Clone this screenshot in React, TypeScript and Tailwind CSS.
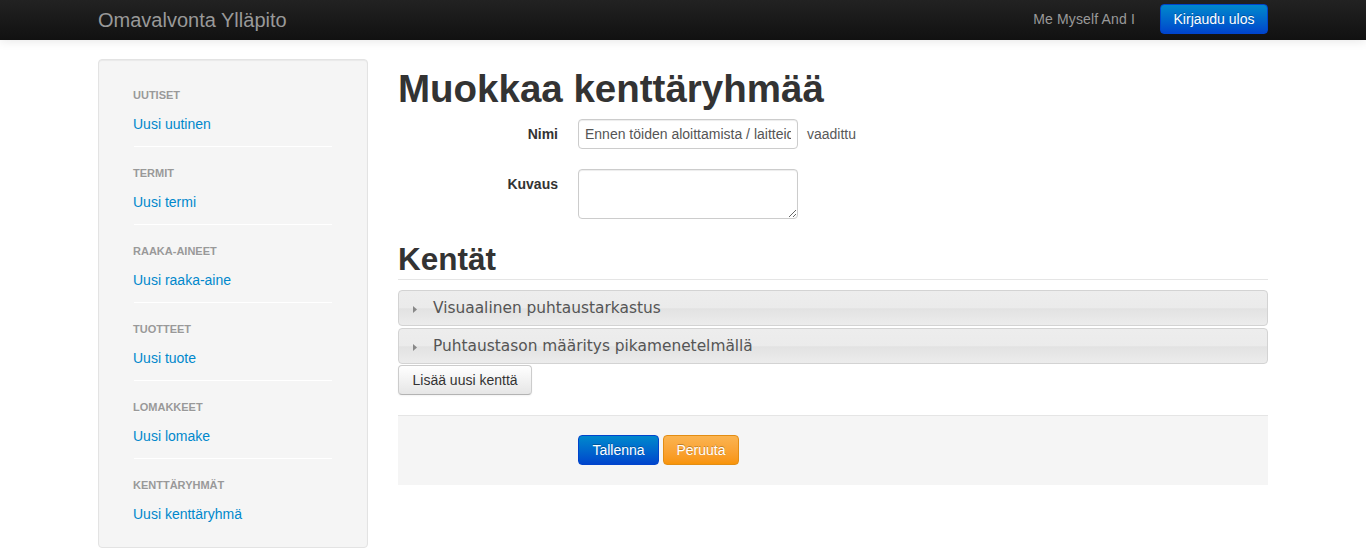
const sections = [
  { title: "Uutiset", link: "Uusi uutinen" },
  { title: "Termit", link: "Uusi termi" },
  { title: "Raaka-aineet", link: "Uusi raaka-aine" },
  { title: "Tuotteet", link: "Uusi tuote" },
  { title: "Lomakkeet", link: "Uusi lomake" },
  { title: "Kenttäryhmät", link: "Uusi kenttäryhmä" },
];

const fields = ["Visuaalinen puhtaustarkastus", "Puhtaustason määritys pikamenetelmällä"];

function Navbar() {
  return (
    <header className="h-10 bg-linear-to-b from-[#222222] to-[#111111] shadow-[0_1px_10px_rgba(0,0,0,0.1)]">
      <div className="mx-auto flex h-full w-[1170px] items-center justify-between">
        <span className="text-[20px] leading-5 text-[#999999]">Omavalvonta Ylläpito</span>
        <div className="flex items-center self-start pt-[4px]">
          <span className="text-[14px] tracking-[0.15px] text-[#999999]">Me Myself And I</span>
          <button className="ml-[25px] h-[30px] w-[108px] rounded-[4px] border border-[#0044cc] bg-linear-to-b from-[#0088cc] to-[#0044cc] text-[14px] text-white [text-shadow:0_-1px_0_rgba(0,0,0,0.25)]">
            Kirjaudu ulos
          </button>
        </div>
      </div>
    </header>
  );
}

function Sidebar() {
  return (
    <aside className="w-[270px] shrink-0 self-start rounded-[4px] border border-[#e3e3e3] bg-[#f5f5f5] pb-[23px] pl-[34px] pr-[35px] pt-[25px] shadow-[inset_0_1px_1px_rgba(0,0,0,0.05)]">
      {sections.map((s, i) => (
        <div key={s.title}>
          {i > 0 ? (
            <div className="mb-[16px] mt-[12px] ml-px h-px border-b border-white bg-[#e5e5e5]" />
          ) : null}
          <div className="h-5 text-[11px] font-bold uppercase leading-5 text-[#999999] [text-shadow:0_1px_0_rgba(255,255,255,0.5)]">
            {s.title}
          </div>
          <a className="mt-[9px] block h-5 text-[14px] leading-5 text-[#0088cc]">{s.link}</a>
        </div>
      ))}
    </aside>
  );
}

function Triangle() {
  return (
    <svg width="16" height="16" viewBox="0 0 16 16" className="shrink-0">
      <polygon points="6,5 10,8.5 6,12" fill="#888888" />
    </svg>
  );
}

export default function App() {
  return (
    <div className="min-h-[552px] bg-white font-['Liberation_Sans',Arial,sans-serif] text-[14px] text-[#333333]">
      <Navbar />
      <div className="mx-auto flex w-[1170px] gap-[30px] pt-[19px]">
        <Sidebar />
        <main className="w-[870px]">
          <h1 className="mt-[10px] h-10 text-[38.5px] font-bold leading-10 text-[#333333]">
            Muokkaa kenttäryhmää
          </h1>
          <div className="mt-[10px] flex">
            <label className="w-[160px] pt-[5px] text-right text-[14px] font-bold leading-5">Nimi</label>
            <div className="ml-[20px] flex items-start">
              <input
                readOnly
                value="Ennen töiden aloittamista / laitteiden puhtaus"
                className="h-[30px] w-[220px] rounded-[4px] border border-[#cccccc] px-[6px] text-[14px] text-[#555555] shadow-[inset_0_1px_1px_rgba(0,0,0,0.075)] outline-none"
              />
              <span className="ml-[9px] pt-[5px] leading-5 text-[#595959]">vaadittu</span>
            </div>
          </div>
          <div className="mt-[20px] flex">
            <label className="w-[160px] pt-[5px] text-right text-[14px] font-bold leading-5">Kuvaus</label>
            <textarea className="ml-[20px] block h-[50px] w-[220px] rounded-[4px] border border-[#cccccc] shadow-[inset_0_1px_1px_rgba(0,0,0,0.075)] outline-none" />
          </div>
          <h2 className="mt-[20px] h-[41px] border-b border-[#e5e5e5] text-[31.5px] font-bold leading-10 text-[#333333]">
            Kentät
          </h2>
          <div className="mt-[10px]">
            {fields.map((f, i) => (
              <div
                key={f}
                className={`flex h-[36px] items-center rounded-[4px] border border-[#d3d3d3] bg-[linear-gradient(to_bottom,#ededed_0%,#ebebeb_50%,#e2e2e2_52%,#ececec_100%)] pl-[8px] pt-[2px] font-['DejaVu_Sans',Verdana,sans-serif] text-[15.4px] text-[#555555] ${i > 0 ? "mt-[2px]" : ""}`}
              >
                <Triangle />
                <span className="ml-[10px]">{f}</span>
              </div>
            ))}
          </div>
          <button className="mt-[1px] h-[30px] rounded-[4px] border border-[#cccccc] border-b-[#b3b3b3] bg-linear-to-b from-white to-[#e6e6e6] px-[13.5px] text-[14px] text-[#333333] shadow-[inset_0_1px_0_rgba(255,255,255,0.2),0_1px_2px_rgba(0,0,0,0.05)]">
            Lisää uusi kenttä
          </button>
          <div className="mt-[20px] flex h-[70px] items-start border-t border-[#e5e5e5] bg-[#f5f5f5] pl-[180px] pt-[19px]">
            <button className="h-[30px] w-[81px] rounded-[4px] border border-[#0044cc] bg-linear-to-b from-[#0088cc] to-[#0044cc] text-[14px] text-white [text-shadow:0_-1px_0_rgba(0,0,0,0.25)]">
              Tallenna
            </button>
            <button className="ml-[4px] h-[30px] w-[76px] rounded-[4px] border border-[#e38d13] bg-linear-to-b from-[#fbb450] to-[#f89406] text-[14px] text-white [text-shadow:0_-1px_0_rgba(0,0,0,0.25)]">
              Peruuta
            </button>
          </div>
        </main>
      </div>
    </div>
  );
}
